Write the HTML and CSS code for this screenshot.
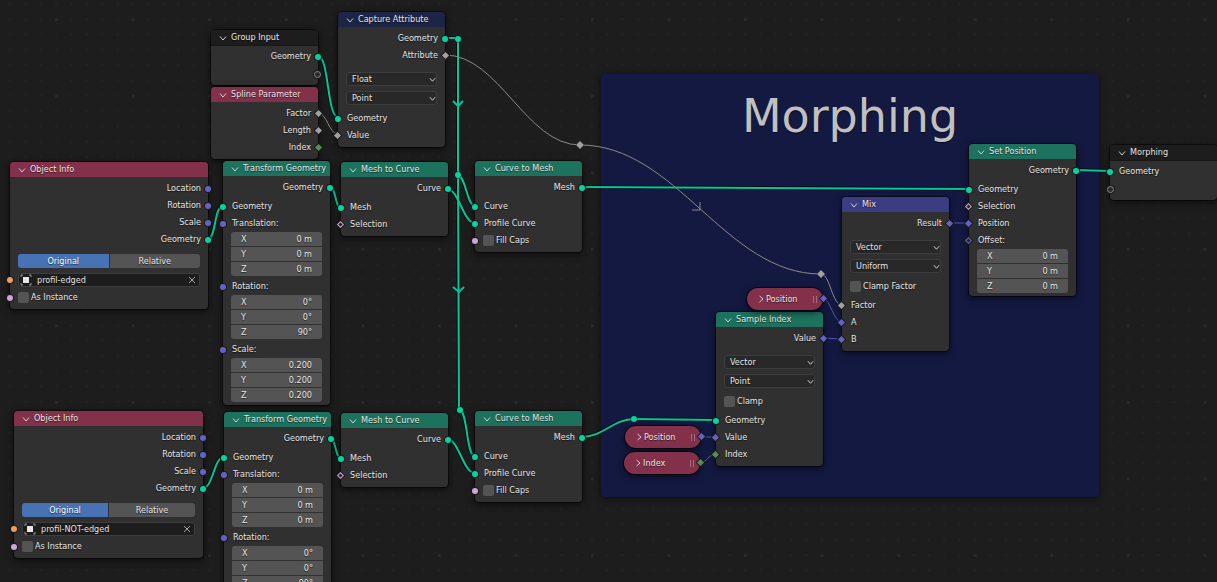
FILE: index.html
```html
<!DOCTYPE html>
<html lang="en">
<head>
<meta charset="utf-8">
<title>Geometry Nodes</title>
<link rel="stylesheet" href="styles.css">
</head>
<body>
<svg class="defs" aria-hidden="true">
  <symbol id="down" viewBox="0 0 8 8"><path d="M1 2.5 4 6 7 2.5"/></symbol>
  <symbol id="right" viewBox="0 0 8 8"><path d="M2.5 1 6 4 2.5 7"/></symbol>
  <symbol id="cross" viewBox="0 0 8 8"><path d="M1 1 7 7M7 1 1 7"/></symbol>
  <symbol id="object" viewBox="0 0 12 12"><path d="M1 3V1H3M9 1H11V3M11 9V11H9M3 11H1V9"/><rect x="3" y="3" width="6" height="6"/></symbol>
</svg>
<main class="editor">
  <svg class="grid" aria-hidden="true">
    <defs>
      <pattern id="dots" width="100" height="100" patternUnits="userSpaceOnUse" patternTransform="translate(55.2 18.3) scale(.7655)">
        <g fill="#242424">
          <path d="M20 0h2.4v2.4h-2.4zM40 0h2.4v2.4h-2.4zM60 0h2.4v2.4h-2.4zM80 0h2.4v2.4h-2.4z"/>
          <path id="dotrow" d="M0 20h2.4v2.4h-2.4zM20 20h2.4v2.4h-2.4zM40 20h2.4v2.4h-2.4zM60 20h2.4v2.4h-2.4zM80 20h2.4v2.4h-2.4z"/>
          <use href="#dotrow" y="20"/><use href="#dotrow" y="40"/><use href="#dotrow" y="60"/>
        </g>
        <path fill="#2b2b2b" d="M0 0h3.6v3.6h-3.6z"/>
      </pattern>
    </defs>
    <rect width="100%" height="100%" fill="url(#dots)"/>
  </svg>

  <section class="frame"><h1>Morphing</h1></section>

  <svg class="links" aria-hidden="true">
    <g class="shade">
      <path d="M318 56C329 56 327 117 338 117M445 38H458V175L459 410M458 175C466 177 467 206 475 206M447 189C459 189 463 223 475 223M208 239C216 239 214 206 223 206M330 187C336 187 335 208 341 208M582 187 969 189M1076 170 1110 171M203 488C213 488 214 457 224 457M330 438C336 438 335 458 341 458M447 439C459 439 463 473 475 473M460 410C468 413 466 456 475 456M582 437C603 437 613 419 634 419L716 420"/>
    </g>
    <g class="geo">
      <path d="M318 56C329 56 327 117 338 117M445 38H458V175L459 410M458 175C466 177 467 206 475 206M447 189C459 189 463 223 475 223M208 239C216 239 214 206 223 206M330 187C336 187 335 208 341 208M582 187 969 189M1076 170 1110 171M203 488C213 488 214 457 224 457M330 438C336 438 335 458 341 458M447 439C459 439 463 473 475 473M460 410C468 413 466 456 475 456M582 437C603 437 613 419 634 419L716 420"/>
      <path d="M453 101 458 106 463 101M453 287 459 292 464 287"/>
    </g>
    <path class="thin" d="M318 113C327 113 329 134 338 134M445 55C499 55 526 145 580 145C677 145 725 274 821 274C830 274 832 305 842 305M700 202V210H692"/>
    <path class="thin vec" d="M823 299C831 299 833 322 842 322M822 338 842 339M949 223H969M701 437H716"/>
    <path class="thin int" d="M700 463C707 463 708 454 716 454"/>
    <g class="dots"><circle cx="458" cy="39" r="3"/><circle cx="458" cy="175" r="3"/><circle cx="460" cy="410" r="3"/><circle cx="634" cy="419" r="3"/></g>
    <path class="reroute" d="M580 141 584 145 580 149 576 145ZM821 270 825 274 821 278 817 274Z"/>
  </svg>

  <article class="node dark group-input">
    <header><button aria-label="Collapse"><svg><use href="#down"/></svg></button><h2>Group Input</h2></header>
    <div class="body"><p class="out">Geometry<i class="s geo-s"></i></p><p class="out"><i class="s empty"></i></p></div>
  </article>

  <article class="node red spline">
    <header><button aria-label="Collapse"><svg><use href="#down"/></svg></button><h2>Spline Parameter</h2></header>
    <div class="body"><p class="out">Factor<i class="s d float"></i></p><p class="out">Length<i class="s d float"></i></p><p class="out">Index<i class="s d int-s"></i></p></div>
  </article>

  <article class="node navy capture">
    <header><button aria-label="Collapse"><svg><use href="#down"/></svg></button><h2>Capture Attribute</h2></header>
    <div class="body"><p class="out">Geometry<i class="s geo-s"></i></p><p class="out">Attribute<i class="s d float"></i></p>
      <div class="menus">
        <div class="menu"><select aria-label="Data type"><option>Float</option></select><svg><use href="#down"/></svg></div>
        <div class="menu"><select aria-label="Domain"><option>Point</option></select><svg><use href="#down"/></svg></div>
      </div>
      <p>Geometry<i class="s geo-s"></i></p><p>Value<i class="s d float"></i></p></div>
  </article>

  <article class="node red object-a">
    <header><button aria-label="Collapse"><svg><use href="#down"/></svg></button><h2>Object Info</h2></header>
    <div class="body"><p class="out">Location<i class="s vec-s"></i></p><p class="out">Rotation<i class="s vec-s"></i></p><p class="out">Scale<i class="s vec-s"></i></p><p class="out">Geometry<i class="s geo-s"></i></p>
      <div class="toggle"><button class="on">Original</button><button>Relative</button></div>
      <div class="pick"><svg class="obj"><use href="#object"/></svg><input type="text" aria-label="Object" value="profil-edged"><button aria-label="Clear"><svg><use href="#cross"/></svg></button><i class="s object-s"></i></div>
      <label class="check"><input type="checkbox">As Instance<i class="s bool"></i></label></div>
  </article>

  <article class="node green transform-a">
    <header><button aria-label="Collapse"><svg><use href="#down"/></svg></button><h2>Transform Geometry</h2></header>
    <div class="body"><p class="out">Geometry<i class="s geo-s"></i></p>
      <p class="first">Geometry<i class="s geo-s"></i></p>
      <p>Translation:<i class="s vec-s"></i></p>
      <div class="xyz"><label>X<input value="0 m"></label><label>Y<input value="0 m"></label><label>Z<input value="0 m"></label></div>
      <p>Rotation:<i class="s vec-s"></i></p>
      <div class="xyz"><label>X<input value="0°"></label><label>Y<input value="0°"></label><label>Z<input value="90°"></label></div>
      <p>Scale:<i class="s vec-s"></i></p>
      <div class="xyz"><label>X<input value="0.200"></label><label>Y<input value="0.200"></label><label>Z<input value="0.200"></label></div></div>
  </article>

  <article class="node green to-curve-a">
    <header><button aria-label="Collapse"><svg><use href="#down"/></svg></button><h2>Mesh to Curve</h2></header>
    <div class="body"><p class="out">Curve<i class="s geo-s"></i></p><p class="first">Mesh<i class="s geo-s"></i></p><p>Selection<i class="s d field bool"></i></p></div>
  </article>

  <article class="node green to-mesh-a">
    <header><button aria-label="Collapse"><svg><use href="#down"/></svg></button><h2>Curve to Mesh</h2></header>
    <div class="body"><p class="out">Mesh<i class="s geo-s"></i></p><p class="first">Curve<i class="s geo-s"></i></p><p>Profile Curve<i class="s geo-s"></i></p>
      <label class="check"><input type="checkbox">Fill Caps<i class="s bool"></i></label></div>
  </article>

  <article class="node red object-b">
    <header><button aria-label="Collapse"><svg><use href="#down"/></svg></button><h2>Object Info</h2></header>
    <div class="body"><p class="out">Location<i class="s vec-s"></i></p><p class="out">Rotation<i class="s vec-s"></i></p><p class="out">Scale<i class="s vec-s"></i></p><p class="out">Geometry<i class="s geo-s"></i></p>
      <div class="toggle"><button class="on">Original</button><button>Relative</button></div>
      <div class="pick"><svg class="obj"><use href="#object"/></svg><input type="text" aria-label="Object" value="profil-NOT-edged"><button aria-label="Clear"><svg><use href="#cross"/></svg></button><i class="s object-s"></i></div>
      <label class="check"><input type="checkbox">As Instance<i class="s bool"></i></label></div>
  </article>

  <article class="node green transform-b">
    <header><button aria-label="Collapse"><svg><use href="#down"/></svg></button><h2>Transform Geometry</h2></header>
    <div class="body"><p class="out">Geometry<i class="s geo-s"></i></p>
      <p class="first">Geometry<i class="s geo-s"></i></p>
      <p>Translation:<i class="s vec-s"></i></p>
      <div class="xyz"><label>X<input value="0 m"></label><label>Y<input value="0 m"></label><label>Z<input value="0 m"></label></div>
      <p>Rotation:<i class="s vec-s"></i></p>
      <div class="xyz"><label>X<input value="0°"></label><label>Y<input value="0°"></label><label>Z<input value="90°"></label></div></div>
  </article>

  <article class="node green to-curve-b">
    <header><button aria-label="Collapse"><svg><use href="#down"/></svg></button><h2>Mesh to Curve</h2></header>
    <div class="body"><p class="out">Curve<i class="s geo-s"></i></p><p class="first">Mesh<i class="s geo-s"></i></p><p>Selection<i class="s d field bool"></i></p></div>
  </article>

  <article class="node green to-mesh-b">
    <header><button aria-label="Collapse"><svg><use href="#down"/></svg></button><h2>Curve to Mesh</h2></header>
    <div class="body"><p class="out">Mesh<i class="s geo-s"></i></p><p class="first">Curve<i class="s geo-s"></i></p><p>Profile Curve<i class="s geo-s"></i></p>
      <label class="check"><input type="checkbox">Fill Caps<i class="s bool"></i></label></div>
  </article>

  <article class="node green sample">
    <header><button aria-label="Collapse"><svg><use href="#down"/></svg></button><h2>Sample Index</h2></header>
    <div class="body"><p class="out">Value<i class="s d vec-s"></i></p>
      <div class="menus">
        <div class="menu"><select aria-label="Data type"><option>Vector</option></select><svg><use href="#down"/></svg></div>
        <div class="menu"><select aria-label="Domain"><option>Point</option></select><svg><use href="#down"/></svg></div>
      </div>
      <label class="check"><input type="checkbox">Clamp</label>
      <p class="first">Geometry<i class="s geo-s"></i></p><p>Value<i class="s d vec-s"></i></p><p>Index<i class="s d int-s"></i></p></div>
  </article>

  <article class="node blue mix">
    <header><button aria-label="Collapse"><svg><use href="#down"/></svg></button><h2>Mix</h2></header>
    <div class="body"><p class="out">Result<i class="s d vec-s"></i></p>
      <div class="menus">
        <div class="menu"><select aria-label="Data type"><option>Vector</option></select><svg><use href="#down"/></svg></div>
        <div class="menu"><select aria-label="Factor mode"><option>Uniform</option></select><svg><use href="#down"/></svg></div>
      </div>
      <label class="check"><input type="checkbox">Clamp Factor</label>
      <p class="first">Factor<i class="s d float"></i></p><p>A<i class="s d vec-s"></i></p><p>B<i class="s d vec-s"></i></p></div>
  </article>

  <article class="node green set-position">
    <header><button aria-label="Collapse"><svg><use href="#down"/></svg></button><h2>Set Position</h2></header>
    <div class="body"><p class="out">Geometry<i class="s geo-s"></i></p>
      <p class="first">Geometry<i class="s geo-s"></i></p><p>Selection<i class="s d field bool"></i></p><p>Position<i class="s d vec-s"></i></p><p>Offset:<i class="s d field vec-s"></i></p>
      <div class="xyz"><label>X<input value="0 m"></label><label>Y<input value="0 m"></label><label>Z<input value="0 m"></label></div></div>
  </article>

  <article class="node dark group-output">
    <header><button aria-label="Collapse"><svg><use href="#down"/></svg></button><h2>Morphing</h2></header>
    <div class="body"><p>Geometry<i class="s geo-s"></i></p><p><i class="s empty"></i></p></div>
  </article>

  <article class="pill position-a"><button aria-label="Expand"><svg><use href="#right"/></svg></button><h2>Position</h2><b class="grip"></b><i class="s d vec-s"></i></article>
  <article class="pill position-b"><button aria-label="Expand"><svg><use href="#right"/></svg></button><h2>Position</h2><b class="grip"></b><i class="s d vec-s"></i></article>
  <article class="pill index"><button aria-label="Expand"><svg><use href="#right"/></svg></button><h2>Index</h2><b class="grip"></b><i class="s d int-s"></i></article>
</main>
</body>
</html>
```
FILE: styles.css
```css
* { box-sizing: border-box; }

body {
  margin: 0;
  background: #1d1d1d;
}

.editor {
  position: relative;
  height: 100vh;
  overflow: hidden;
  color: #e6e6e6;
  font: 9px/17px "DejaVu Sans Condensed", "DejaVu Sans", sans-serif;
  text-shadow: 0 1px 1px rgba(0, 0, 0, .6);
}

h1, h2, p { margin: 0; font-weight: normal; }
h2 { font-size: 9px; line-height: 15px; white-space: nowrap; }

button, input, select {
  margin: 0;
  padding: 0;
  border: 0;
  background: none;
  color: inherit;
  font: inherit;
  text-shadow: inherit;
}

svg { display: block; width: 8px; height: 8px; fill: none; stroke: #d0d0d0; stroke-width: 1; }
.defs { position: absolute; width: 0; height: 0; }
.grid, .links { position: absolute; inset: 0; width: 100%; height: 100%; stroke: none; }

/* Links between sockets */
.links path { fill: none; }
.shade { stroke: rgba(0, 0, 0, .5); stroke-width: 4; }
.geo { stroke: #00c898; stroke-width: 2; }
.thin { stroke: #8c8a84; stroke-width: 1; }
.vec { stroke: #5555a8; }
.int { stroke: #4b7550; }
.dots { fill: #00d6a3; stroke: #111; stroke-width: 1; paint-order: stroke; }
.links .reroute { fill: #a1a1a1; stroke: #141414; stroke-width: 1; paint-order: stroke; }

.frame {
  position: absolute;
  left: 601px;
  top: 74px;
  width: 498px;
  height: 423px;
  border-radius: 4px;
  background: #141942;
  box-shadow: 0 1px 6px rgba(0, 0, 0, .6);
  text-align: center;
}
.frame h1 {
  padding-top: 14px;
  color: #c0c0c0;
  font: 46px/56px "DejaVu Sans", sans-serif;
}

/* Nodes */
.node {
  position: absolute;
  width: 107px;
  border-radius: 4px;
  background: #303030;
  box-shadow: 0 0 0 1px rgba(0, 0, 0, .45), 0 2px 6px 1px rgba(0, 0, 0, .55);
}
.node header {
  display: flex;
  align-items: center;
  gap: 4px;
  height: 15px;
  padding-left: 8px;
  border-radius: 4px 4px 0 0;
}
.dark header { background: #1d1d1d; box-shadow: 0 1px 0 #171717; }
.red header { background: #83314a; }
.green header { background: #1d725e; }
.navy header { background: #1d2546; }
.blue header { background: #3c3c83; }

.body { display: flow-root; padding: 3px 0; }
.body p { position: relative; height: 17px; padding: 0 9px; }
.body .out { padding: 0 7px; text-align: right; }
.body .first { margin-top: 2px; }

/* Sockets */
.s {
  position: absolute;
  left: -3px;
  top: 50%;
  width: 6px;
  height: 6px;
  margin-top: -3px;
  border-radius: 50%;
  background: currentColor;
  box-shadow: 0 0 0 1px #1a1a1a;
}
.out .s, .pill .s { left: auto; right: -3px; }
.s.d { border-radius: 0; width: 5px; height: 5px; transform: rotate(45deg); }
.geo-s { color: #00d6a3; }
.vec-s { color: #6363c7; }
.bool { color: #cca6d6; }
.float { color: #a1a1a1; }
.int-s { color: #598c5c; }
.object-s { color: #ed9e5c; }
.s.field { border: 1px solid currentColor; background: #222; }
.s.empty { border: 1px solid #8a8a8a; background: #2a2a2a; width: 7px; height: 7px; }

/* Controls */
.menus { display: grid; gap: 5px; margin: 8px 8px 5px; }
.menu { position: relative; display: grid; }
.menu select {
  appearance: none;
  height: 14px;
  padding: 0 6px;
  border-radius: 3px;
  background: #282828;
  box-shadow: inset 0 0 0 1px #3d3d3d;
  line-height: 14px;
}
.menu svg { position: absolute; right: 1px; top: 4px; width: 7px; height: 7px; stroke: #e6e6e6; pointer-events: none; }

.check { position: relative; display: flex; align-items: center; gap: 2px; height: 17px; padding-left: 8px; }
.check input { appearance: none; width: 11px; height: 11px; border-radius: 2px; background: #545454; }

.toggle {
  display: grid;
  grid-template-columns: 1fr 1fr;
  gap: 1px;
  height: 14px;
  margin: 6px 8px 5px;
  border-radius: 3px;
  overflow: hidden;
}
.toggle button { background: #545454; line-height: 14px; }
.toggle .on { background: #4772b3; color: #fff; }

.pick {
  position: relative;
  display: flex;
  align-items: center;
  height: 14px;
  margin: 0 8px 2px;
  padding: 0 4px 0 2px;
  border-radius: 3px;
  background: #1d1d1d;
  box-shadow: inset 0 0 0 1px #3d3d3d;
}
.pick .obj { width: 12px; height: 12px; }
.pick .obj use { fill: #e6e6e6; stroke: #999; }
.pick button svg { stroke: #a8a8a8; }
.pick input { flex: 1; min-width: 0; margin-left: 5px; line-height: 14px; }
.pick .s { left: -11px; }
#object path { fill: none; }
#object rect { stroke: none; }

.xyz {
  display: grid;
  grid-template-columns: minmax(0, 1fr);
  gap: 1px;
  margin: 0 8px 2px;
  border-radius: 3px;
  overflow: hidden;
}
.xyz:last-child { margin-bottom: 0; }
.xyz label { display: flex; height: 14px; padding: 0 10px; background: #545454; line-height: 14px; }
.xyz input { flex: 1; min-width: 0; height: 14px; text-align: right; }

/* Collapsed nodes */
.pill {
  position: absolute;
  display: flex;
  align-items: center;
  gap: 1px;
  width: 76px;
  height: 22px;
  padding: 0 6px 0 10px;
  border-radius: 11px;
  background: #83314a;
  box-shadow: 0 0 0 1px rgba(0, 0, 0, .6), 0 2px 6px 1px rgba(0, 0, 0, .55);
}
.grip { width: 4px; height: 7px; margin-left: auto; border: solid #a56b7c; border-width: 0 1px; }

/* Places on the canvas */
.group-input { left: 211px; top: 30px; }
.spline { left: 211px; top: 87px; }
.capture { left: 338px; top: 12px; }
.object-a { left: 10px; top: 162px; width: 198px; }
.transform-a { left: 223px; top: 161px; }
.to-curve-a { left: 341px; top: 162px; }
.to-mesh-a { left: 475px; top: 161px; }
.object-b { left: 14px; top: 411px; width: 189px; }
.transform-b { left: 224px; top: 412px; }
.to-curve-b { left: 341px; top: 413px; }
.to-mesh-b { left: 475px; top: 411px; }
.sample { left: 716px; top: 312px; }
.mix { left: 842px; top: 197px; }
.set-position { left: 969px; top: 144px; }
.group-output { left: 1110px; top: 145px; }
.position-a { left: 747px; top: 288px; }
.position-b { left: 625px; top: 426px; }
.index { left: 624px; top: 452px; }
```
